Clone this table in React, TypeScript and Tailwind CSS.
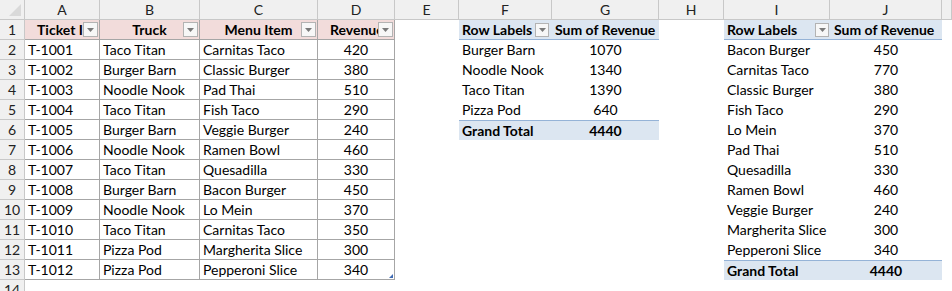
import React from "react";

const COLS = ["A", "B", "C", "D", "E", "F", "G", "H", "I", "J", ""];

const table: [string, string, string, string][] = [
  ["T-1001", "Taco Titan", "Carnitas Taco", "420"],
  ["T-1002", "Burger Barn", "Classic Burger", "380"],
  ["T-1003", "Noodle Nook", "Pad Thai", "510"],
  ["T-1004", "Taco Titan", "Fish Taco", "290"],
  ["T-1005", "Burger Barn", "Veggie Burger", "240"],
  ["T-1006", "Noodle Nook", "Ramen Bowl", "460"],
  ["T-1007", "Taco Titan", "Quesadilla", "330"],
  ["T-1008", "Burger Barn", "Bacon Burger", "450"],
  ["T-1009", "Noodle Nook", "Lo Mein", "370"],
  ["T-1010", "Taco Titan", "Carnitas Taco", "350"],
  ["T-1011", "Pizza Pod", "Margherita Slice", "300"],
  ["T-1012", "Pizza Pod", "Pepperoni Slice", "340"],
];

const pivot1: [string, string][] = [
  ["Burger Barn", "1070"],
  ["Noodle Nook", "1340"],
  ["Taco Titan", "1390"],
  ["Pizza Pod", "640"],
];

const pivot2: [string, string][] = [
  ["Bacon Burger", "450"],
  ["Carnitas Taco", "770"],
  ["Classic Burger", "380"],
  ["Fish Taco", "290"],
  ["Lo Mein", "370"],
  ["Pad Thai", "510"],
  ["Quesadilla", "330"],
  ["Ramen Bowl", "460"],
  ["Veggie Burger", "240"],
  ["Margherita Slice", "300"],
  ["Pepperoni Slice", "340"],
];

function Arrow() {
  return (
    <svg width="7" height="4" viewBox="0 0 7 4">
      <path d="M0 0 L7 0 L3.5 4 Z" fill="#7a7a7a" />
    </svg>
  );
}

function FilterBtn() {
  return (
    <div className="absolute right-[1px] top-[2px] w-[15px] h-[15px] border border-[#b3b3b3] bg-[#f7f7f7] flex items-center justify-center">
      <Arrow />
    </div>
  );
}

function Empty() {
  return <div className="h-[20px]" />;
}

export default function App() {
  const cells: React.ReactNode[] = [];

  cells.push(
    <div key="corner" className="h-[20px] bg-[#f0f0f0] border-r border-b border-[#c8c8c8] flex items-end justify-end pr-[3px] pb-[3px]">
      <svg width="12" height="12" viewBox="0 0 12 12">
        <path d="M12 0 L12 12 L0 12 Z" fill="#d9d9d9" />
      </svg>
    </div>
  );
  COLS.forEach((c, i) => {
    cells.push(
      <div
        key={"h" + i}
        className="h-[20px] bg-[#f0f0f0] border-r border-b border-[#c8c8c8] flex items-center justify-center text-[#222] text-[14px]"
      >
        {c}
      </div>
    );
  });

  for (let r = 1; r <= 14; r++) {
    cells.push(
      <div
        key={"r" + r}
        className="h-[20px] bg-[#f0f0f0] border-r border-b border-[#c8c8c8] flex items-center justify-center text-[#222] text-[14px]"
      >
        {r}
      </div>
    );

    if (r === 1) {
      const heads = ["Ticket ID", "Truck", "Menu Item", "Revenue"];
      heads.forEach((h, i) => {
        const clip = i === 0 || i === 3;
        cells.push(
          <div
            key={`t${r}${i}`}
            className="relative h-[20px] bg-[#f2dcdb] border-r border-b border-[#a6a6a6] font-bold text-[14px] leading-[20px]"
          >
            {clip ? (
              <div className={`absolute left-0 top-0 bottom-0 overflow-hidden whitespace-nowrap right-[16px] ${i === 0 ? "pl-[12px]" : "pl-[12px]"}`}>
                {h}
              </div>
            ) : (
              <div className="text-center whitespace-nowrap">{h}</div>
            )}
            <FilterBtn />
          </div>
        );
      });
    } else if (r <= 13) {
      const row = table[r - 2];
      row.forEach((v, i) => {
        cells.push(
          <div
            key={`t${r}${i}`}
            className={`relative h-[20px] border-r border-b border-[#a6a6a6] text-[14px] leading-[20px] whitespace-nowrap ${i === 3 ? "text-center" : "pl-[3px]"}`}
          >
            {v}
            {r === 13 && i === 3 && (
              <svg className="absolute right-[1px] bottom-[1px]" width="4" height="4" viewBox="0 0 4 4">
                <path d="M4 0 L4 4 L0 4 Z" fill="#3e6ab3" />
              </svg>
            )}
          </div>
        );
      });
    } else {
      for (let i = 0; i < 4; i++) cells.push(<Empty key={`t${r}${i}`} />);
    }

    cells.push(<Empty key={`e${r}`} />);

    if (r === 1) {
      cells.push(
        <div key={`f${r}`} className="relative h-[20px] bg-[#dce6f1] border-b border-[#95b3d7] font-bold text-[14px] leading-[20px] pl-[3px] whitespace-nowrap">
          Row Labels
          <div className="absolute right-[3px] top-[3px] w-[14px] h-[14px] border border-[#b3b3b3] bg-[#f7f7f7] flex items-center justify-center">
            <Arrow />
          </div>
        </div>
      );
      cells.push(
        <div key={`g${r}`} className="h-[20px] bg-[#dce6f1] border-b border-[#95b3d7] font-bold text-[14px] leading-[20px] pl-[3px] whitespace-nowrap">
          Sum of Revenue
        </div>
      );
    } else if (r <= 5) {
      const [a, b] = pivot1[r - 2];
      cells.push(
        <div key={`f${r}`} className="h-[20px] text-[14px] leading-[20px] pl-[3px] whitespace-nowrap">{a}</div>
      );
      cells.push(
        <div key={`g${r}`} className="h-[20px] text-[14px] leading-[20px] text-center whitespace-nowrap">{b}</div>
      );
    } else if (r === 6) {
      cells.push(
        <div key={`f${r}`} className="h-[20px] bg-[#dce6f1] border-t border-[#95b3d7] font-bold text-[14px] leading-[19px] pl-[3px] whitespace-nowrap">Grand Total</div>
      );
      cells.push(
        <div key={`g${r}`} className="h-[20px] bg-[#dce6f1] border-t border-[#95b3d7] font-bold text-[14px] leading-[19px] text-center whitespace-nowrap">4440</div>
      );
    } else {
      cells.push(<Empty key={`f${r}`} />);
      cells.push(<Empty key={`g${r}`} />);
    }

    cells.push(<Empty key={`hh${r}`} />);

    if (r === 1) {
      cells.push(
        <div key={`i${r}`} className="relative h-[20px] bg-[#dce6f1] border-b border-[#95b3d7] font-bold text-[14px] leading-[20px] pl-[3px] whitespace-nowrap">
          Row Labels
          <div className="absolute right-[1px] top-[3px] w-[14px] h-[14px] border border-[#b3b3b3] bg-[#f7f7f7] flex items-center justify-center">
            <Arrow />
          </div>
        </div>
      );
      cells.push(
        <div key={`j${r}`} className="h-[20px] bg-[#dce6f1] border-b border-[#95b3d7] font-bold text-[14px] leading-[20px] pl-[4px] whitespace-nowrap">
          Sum of Revenue
        </div>
      );
    } else if (r <= 12) {
      const [a, b] = pivot2[r - 2];
      cells.push(
        <div key={`i${r}`} className="h-[20px] text-[14px] leading-[20px] pl-[3px] whitespace-nowrap">{a}</div>
      );
      cells.push(
        <div key={`j${r}`} className="h-[20px] text-[14px] leading-[20px] text-center whitespace-nowrap">{b}</div>
      );
    } else if (r === 13) {
      cells.push(
        <div key={`i${r}`} className="h-[20px] bg-[#dce6f1] border-t border-[#95b3d7] font-bold text-[14px] leading-[19px] pl-[3px] whitespace-nowrap">Grand Total</div>
      );
      cells.push(
        <div key={`j${r}`} className="h-[20px] bg-[#dce6f1] border-t border-[#95b3d7] font-bold text-[14px] leading-[19px] text-center whitespace-nowrap">4440</div>
      );
    } else {
      cells.push(<Empty key={`i${r}`} />);
      cells.push(<Empty key={`j${r}`} />);
    }

    cells.push(<Empty key={`k${r}`} />);
  }

  return (
    <div
      className="w-[952px] h-[291px] overflow-hidden bg-white text-black"
      style={{ fontFamily: "Lato, 'Open Sans', sans-serif" }}
    >
      <div className="grid grid-cols-[25px_75px_100px_118px_77px_64px_93px_107px_65px_106px_112px_10px]">
        {cells}
      </div>
    </div>
  );
}
